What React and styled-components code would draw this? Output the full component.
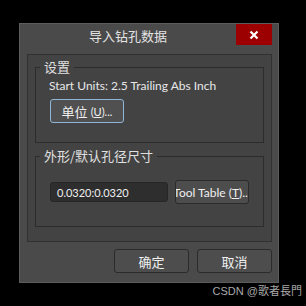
import React from 'react'
import styled, {createGlobalStyle} from 'styled-components'

const GlobalStyle = createGlobalStyle`
  html, body {
    margin: 0;
    padding: 0;
    background: #000;
  }
  body {
    font-family: Lato, "Noto Sans CJK SC", sans-serif;
  }
`

const Page = styled.div`
  width: 306px;
  height: 306px;
  padding: 23px 0 0 19px;
  box-sizing: border-box;
  display: flex;
  flex-direction: column;
`

const Dialog = styled.div`
  width: 260px;
  height: 260px;
  box-sizing: border-box;
  border: 1px solid #5c5c5c;
  background: #4a4a4a;
  display: flex;
  flex-direction: column;
`

const TitleBar = styled.div`
  height: 22px;
  display: flex;
  align-items: stretch;
`

const Title = styled.div`
  flex: 1;
  display: flex;
  align-items: center;
  justify-content: center;
  color: #e4e4e4;
  font-family: "Noto Sans CJK SC", sans-serif;
  font-size: 13px;
  padding-top: 1px;
`

const CloseButton = styled.div`
  width: 36px;
  height: 21px;
  margin-right: 6px;
  background: #9c0000;
  display: flex;
  align-items: center;
  justify-content: center;
`

const Panel = styled.div`
  margin: 8px 6px 0 7px;
  border: 1px solid #313131;
  background: #434343;
  padding: 0 7px 14px 7px;
  display: flex;
  flex-direction: column;
`

const Group = styled.div`
  margin-top: ${(props) => props.gap}px;
  padding: 0 0 0 13px;
  border: 1px solid #2c2c2c;
  height: ${(props) => props.height}px;
  box-sizing: border-box;
  display: flex;
  flex-direction: column;
  align-items: flex-start;
`

const Legend = styled.div`
  margin: -8px 0 0 -9px;
  padding: 0 4px;
  background: #434343;
  font-family: "Noto Sans CJK SC", sans-serif;
  font-size: 13px;
  line-height: 14px;
  height: 14px;
  color: #e0e0e0;
`

const Info = styled.div`
  margin-top: 5px;
  color: #e8e8e8;
  font-size: 12px;
  line-height: 14px;
`

const Button = styled.div`
  width: ${(props) => props.width || 74}px;
  height: 24px;
  flex-shrink: 0;
  box-sizing: border-box;
  border: 1px solid ${(props) => props.focused ? '#8fb6da' : '#2b2b2b'};
  border-radius: 3px;
  background: ${(props) => props.focused ? '#505050' : '#4d4d4d'};
  color: #f0f0f0;
  display: flex;
  align-items: center;
  justify-content: center;
  white-space: nowrap;
  overflow: hidden;
  font-size: 12px;
`

const Cjk = styled.span`
  font-family: "Noto Sans CJK SC", sans-serif;
  font-size: 13px;
`

const Hint = styled.span`
  font-size: 11px;
  margin-left: 3px;
`

const Key = styled.span`
  text-decoration: underline;
`

const UnitButton = styled(Button)`
  margin: 6px 0 0 1px;
`

const SizeRow = styled.div`
  margin: 17px 0 0 1px;
  display: flex;
  align-items: center;
  gap: 7px;
`

const Input = styled.div`
  width: 118px;
  height: 20px;
  box-sizing: border-box;
  border: 1px solid #262626;
  border-radius: 3px;
  background: #2e2e2e;
  color: #f0f0f0;
  font-size: 11px;
  display: flex;
  align-items: center;
  padding-left: 6px;
`

const Footer = styled.div`
  margin: 7px 6px 0 0;
  display: flex;
  justify-content: flex-end;
  gap: 8px;
`

const Watermark = styled.div`
  margin-top: 2px;
  width: 283px;
  text-align: right;
  color: #a9a9a9;
  font-family: "Liberation Sans", "Noto Sans CJK SC", sans-serif;
  font-size: 11px;
  line-height: 13px;
`

const CloseIcon = () => (
  <svg width="10" height="10" viewBox="0 0 10 10">
    <path d="M1.5 1.5 L8.5 8.5 M8.5 1.5 L1.5 8.5" stroke="#fff" strokeWidth="2.2" />
  </svg>
)

const App = () => (
  <Page>
    <GlobalStyle />
    <Dialog>
      <TitleBar>
        <Title>导入钻孔数据</Title>
        <CloseButton><CloseIcon /></CloseButton>
      </TitleBar>
      <Panel>
        <Group gap={12} height={76}>
          <Legend>设置</Legend>
          <Info>Start Units: 2.5 Trailing Abs Inch</Info>
          <UnitButton focused>
            <Cjk>单位</Cjk>
            <Hint>(<Key>U</Key>)...</Hint>
          </UnitButton>
        </Group>
        <Group gap={13} height={71}>
          <Legend>外形/默认孔径尺寸</Legend>
          <SizeRow>
            <Input>0.0320:0.0320</Input>
            <Button>Tool Table (<Key>T</Key>)...</Button>
          </SizeRow>
        </Group>
      </Panel>
      <Footer>
        <Button width={75}><Cjk>确定</Cjk></Button>
        <Button width={75}><Cjk>取消</Cjk></Button>
      </Footer>
    </Dialog>
    <Watermark>CSDN @歌者長門</Watermark>
  </Page>
)

export default App
